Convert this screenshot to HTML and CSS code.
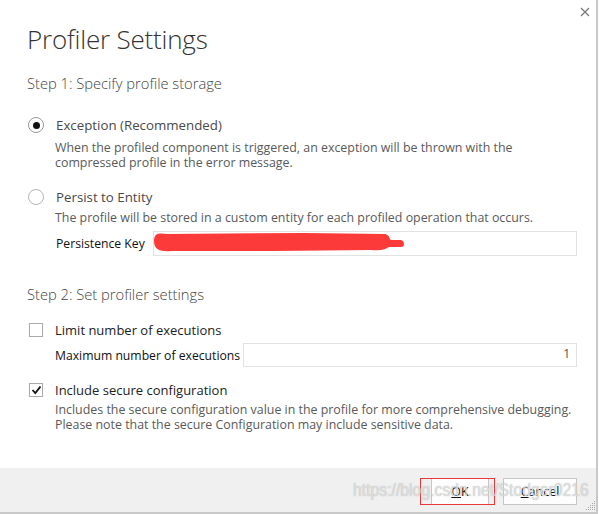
FILE: index.html
```html
<!DOCTYPE html>
<html>
<head>
<meta charset="utf-8">
<link rel="stylesheet" href="styles.css">
</head>
<body>
<div class="dialog">
  <div class="close"><svg width="10" height="10" viewBox="0 0 10 10"><path d="M1 1 L9 9 M9 1 L1 9" stroke="#7a7a7a" stroke-width="1.3" fill="none"/></svg></div>
  <div class="content">
    <h1 class="title">Profiler Settings</h1>
    <h2 class="step">Step 1: Specify profile storage</h2>
    <div class="row row-first">
      <span class="radio checked"></span>
      <span class="opt-label">Exception (Recommended)</span>
    </div>
    <p class="desc desc-first">When the profiled component is triggered, an exception will be thrown with the<br>compressed profile in the error message.</p>
    <div class="row row-second">
      <span class="radio"></span>
      <span class="opt-label">Persist to Entity</span>
    </div>
    <p class="desc desc-second">The profile will be stored in a custom entity for each profiled operation that occurs.</p>
    <div class="field field-key">
      <span class="field-label">Persistence Key</span>
      <div class="input-wrap">
        <div class="input"></div>
        <svg class="scribble" width="260" height="24" viewBox="0 0 260 24"><path d="M1,9 C1,1 6,1 14,2 L150,1 L232,2 C237,3 236,7 238,8 L248,8 C252,9 252,15 248,15 L236,15 C233,17 228,19 218,18 L120,19 L18,19 C6,20 1,17 1,9 Z" fill="#fc3a3a"/></svg>
      </div>
    </div>
    <h2 class="step step-two">Step 2: Set profiler settings</h2>
    <div class="row row-check1">
      <span class="check"></span>
      <span class="opt-label dark">Limit number of executions</span>
    </div>
    <div class="field field-max">
      <span class="field-label">Maximum number of executions</span>
      <div class="input-wrap">
        <div class="input num">1</div>
      </div>
    </div>
    <div class="row row-check2">
      <span class="check checked"><svg width="11" height="10" viewBox="0 0 11 10"><path d="M1.5 5 L4.3 8 L9.5 1.5" stroke="#111" stroke-width="1.8" fill="none"/></svg></span>
      <span class="opt-label dark">Include secure configuration</span>
    </div>
    <p class="desc desc-third">Includes the secure configuration value in the profile for more comprehensive debugging.<br>Please note that the secure Configuration may include sensitive data.</p>
  </div>
  <div class="footer">
    <div class="btn-wrap">
      <button class="btn"><u>O</u>K</button>
      <span class="mark"></span>
    </div>
    <button class="btn btn-cancel"><u>C</u>ancel</button>
    <span class="watermark">https://blog.csdn.net/Stodger0216</span>
    <svg class="grip" width="11" height="11" viewBox="0 0 11 11">
      <g fill="#a8a8a8">
        <rect x="9" y="1" width="1" height="1"/>
        <rect x="7" y="3" width="1" height="1"/><rect x="9" y="3" width="1" height="1"/>
        <rect x="5" y="5" width="1" height="1"/><rect x="7" y="5" width="1" height="1"/><rect x="9" y="5" width="1" height="1"/>
        <rect x="3" y="7" width="1" height="1"/><rect x="5" y="7" width="1" height="1"/><rect x="7" y="7" width="1" height="1"/><rect x="9" y="7" width="1" height="1"/>
        <rect x="1" y="9" width="1" height="1"/><rect x="3" y="9" width="1" height="1"/><rect x="5" y="9" width="1" height="1"/><rect x="7" y="9" width="1" height="1"/><rect x="9" y="9" width="1" height="1"/>
      </g>
    </svg>
  </div>
</div>
</body>
</html>
```

FILE: styles.css
```css
html, body {
  margin: 0;
  padding: 0;
  background: #ffffff;
}
body {
  width: 599px;
  height: 514px;
  overflow: hidden;
  font-family: "Open Sans", "Noto Sans", sans-serif;
}
.dialog {
  position: relative;
  width: 596px;
  height: 512px;
  border-right: 2px solid #c9c9c9;
  border-bottom: 2px solid #c9c9c9;
  display: flex;
  flex-direction: column;
  background: #fff;
  overflow: hidden;
}
.close {
  position: absolute;
  top: 7px;
  left: 580px;
  width: 10px;
  height: 10px;
}
.close svg { display: block; }
.content {
  flex: 1;
  padding: 0 19px 0 27px;
  display: flex;
  flex-direction: column;
}
.title {
  margin: 22px 0 0 0;
  font-size: 26px;
  line-height: 34px;
  font-weight: 300;
  color: #333;
  letter-spacing: -0.2px;
}
.step {
  margin: 17px 0 0 0;
  font-size: 14.7px;
  line-height: 20px;
  font-weight: 300;
  color: #444;
}
.step-two { margin-top: 28px; }
.row {
  display: flex;
  align-items: center;
  height: 18px;
}
.row-first { margin-top: 23px; }
.row-second { margin-top: 18px; }
.row-check1 { margin-top: 17px; }
.row-check2 { margin-top: 14px; }
.radio {
  width: 14px;
  height: 14px;
  border: 1px solid #b4b4b4;
  border-radius: 50%;
  box-sizing: content-box;
  margin-left: 1px;
  margin-right: 12px;
  display: flex;
  align-items: center;
  justify-content: center;
  background: #fff;
}
.radio.checked { border-color: #9a9a9a; }
.radio.checked::after {
  content: "";
  width: 7px;
  height: 7px;
  border-radius: 50%;
  background: #111;
}
.check {
  width: 12px;
  height: 12px;
  border: 1px solid #aaa;
  margin-left: 2px;
  margin-right: 12px;
  display: flex;
  align-items: center;
  justify-content: center;
  background: #fff;
}
.check svg { display: block; }
.opt-label {
  font-size: 13.3px;
  color: #4a4a4a;
}
.opt-label.dark { color: #222; font-size: 13px; }
.desc {
  margin: 6px 0 0 28px;
  font-size: 12.4px;
  line-height: 15px;
  color: #5a5a5a;
  white-space: nowrap;
}
.desc-second { margin-top: 4px; }
.desc-third { margin-top: 3px; }
.field {
  display: flex;
  align-items: center;
  margin-left: 28px;
}
.field-key { margin-top: 6px; height: 25px; }
.field-max { margin-top: 4px; height: 24px; }
.field-label {
  font-size: 12.2px;
  color: #111;
  white-space: nowrap;
}
.field-key .field-label { width: 97px; margin-left: 1px; }
.field-max .field-label { width: 188px; }
.input-wrap {
  position: relative;
  flex: 1;
  height: 100%;
}
.input {
  box-sizing: border-box;
  height: 100%;
  border: 1px solid #e2e2e2;
  background: #fff;
}
.input.num {
  text-align: right;
  font-size: 12px;
  line-height: 20px;
  padding-right: 6px;
  color: #555;
}
.scribble {
  position: absolute;
  left: 0;
  top: 1px;
}
.footer {
  position: relative;
  height: 44px;
  background: #f0f0f0;
  display: flex;
  justify-content: flex-end;
  align-items: flex-start;
  padding: 10px 19px 0 0;
  box-sizing: border-box;
  gap: 14px;
}
.btn-wrap { position: relative; }
.btn {
  display: block;
  width: 58px;
  height: 27px;
  padding: 0;
  border: 1px solid #c6c6c6;
  background: #fdfdfd;
  font-family: "Open Sans", "Noto Sans", sans-serif;
  font-size: 12.5px;
  color: #111;
}
.btn-cancel { width: 74px; }
.mark {
  position: absolute;
  left: -11px;
  top: 0;
  width: 73px;
  height: 25px;
  border: 1px solid #e8383a;
}
.watermark {
  position: absolute;
  left: 353px;
  top: 11px;
  font-family: "Liberation Sans", Arial, sans-serif;
  font-size: 19px;
  color: rgba(236, 236, 236, 0.8);
  text-shadow: 0 0 1px rgba(110, 110, 110, 0.6);
  white-space: nowrap;
  pointer-events: none;
  transform: scaleX(0.83);
  transform-origin: 0 0;
}
.grip {
  position: absolute;
  right: 0;
  bottom: 1px;
}
```
